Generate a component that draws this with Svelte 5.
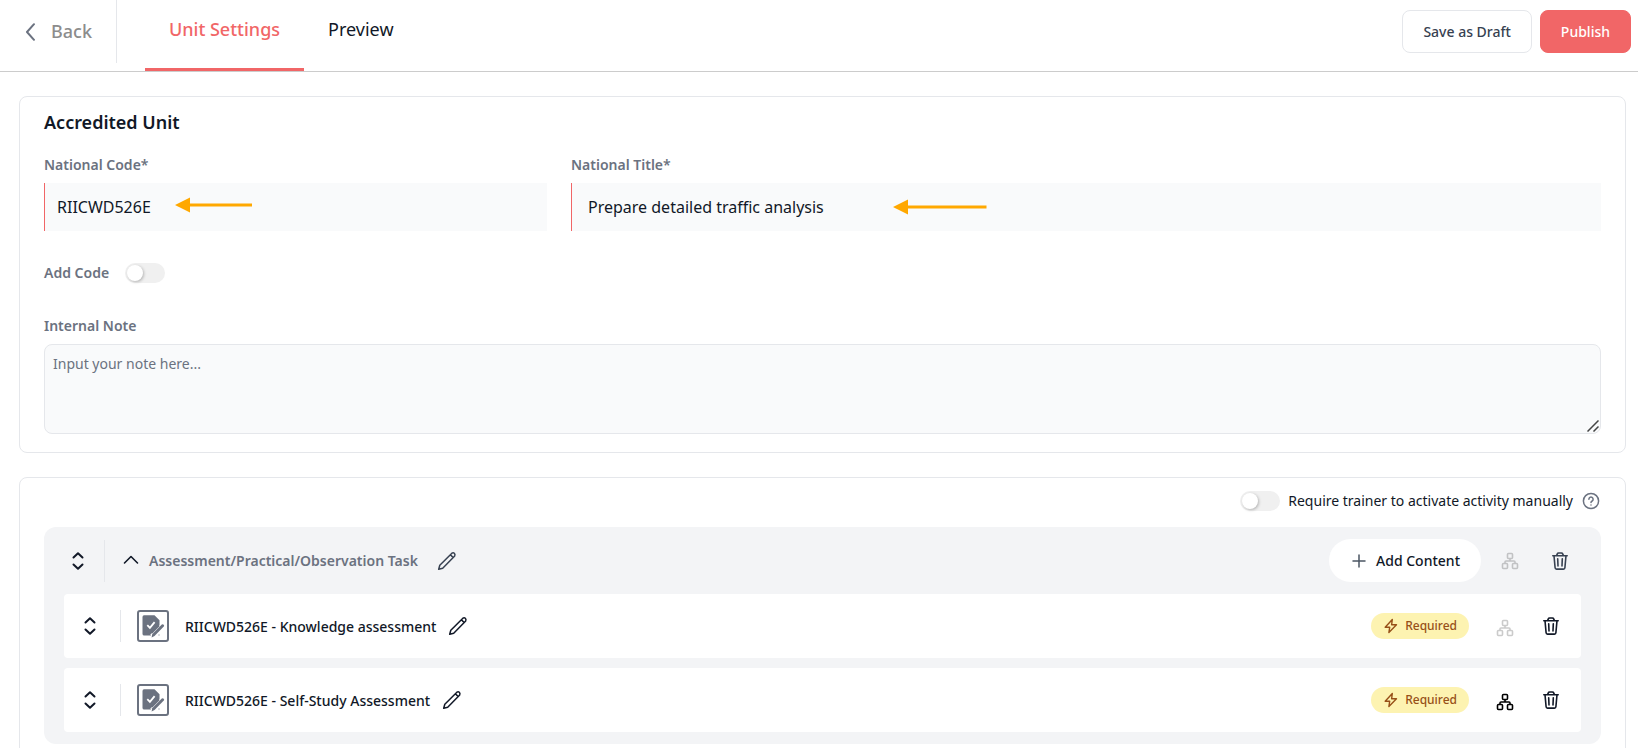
<script lang="ts">
  let code = $state("RIICWD526E");
  let title = $state("Prepare detailed traffic analysis");
  let note = $state("");
  let addCode = $state(false);
  let manual = $state(false);
  let open = $state(true);

  const items = [
    { name: "RIICWD526E - Knowledge assessment", linked: false },
    { name: "RIICWD526E - Self-Study Assessment", linked: true },
  ];
</script>

{#snippet sortIcon()}
  <svg width="20" height="20" viewBox="0 0 20 20" fill="none" stroke="currentColor" stroke-width="2" stroke-linecap="round" stroke-linejoin="round">
    <path d="M5.500 6.500 10 2.200l4.500 4.300M5.500 13.500l4.500 4.300 4.500-4.300" />
  </svg>
{/snippet}

{#snippet pencilIcon()}
  <svg width="20" height="20" viewBox="0 0 20 20" fill="none" stroke="currentColor" stroke-width="1.500" stroke-linecap="round" stroke-linejoin="round">
    <path d="M1.700 18.300l1.100-4L14.900 2.200q1.300-1 2.400.1t.4 2.600L5.700 17.200zM13.600 4l2.400 2.400" />
  </svg>
{/snippet}

{#snippet treeIcon()}
  <svg width="18" height="18" viewBox="0 0 18 18" fill="none" stroke="currentColor" stroke-width="1.600" stroke-linejoin="round">
    <rect x="6.500" y="1.500" width="5" height="5" rx="1" />
    <rect x="1.500" y="11.500" width="5" height="5" rx="1" />
    <rect x="11.500" y="11.500" width="5" height="5" rx="1" />
    <path d="M9 6.500V9M4 11.500V10q0-1 1-1h8q1 0 1 1v1.500" />
  </svg>
{/snippet}

{#snippet trashIcon()}
  <svg width="20" height="20" viewBox="0 0 20 20" fill="none" stroke="currentColor" stroke-width="1.600" stroke-linecap="round" stroke-linejoin="round">
    <path d="M2.800 4.800h14.400M4 4.800l1.100 12q.1 1.300 1.400 1.300h7q1.300 0 1.400-1.300l1.100-12M6.600 4.600l.7-1.700q.3-.9 1.300-.9h2.800q1 0 1.300.9l.7 1.700M7.700 7.800l.3 7.200M12.300 7.800l-.3 7.200" />
  </svg>
{/snippet}

{#snippet taskIcon()}
  <svg width="24" height="24" viewBox="0 0 24 24">
    <path fill="#6b7280" d="M3 1.200h10.500l5 5V13l-8.500 8.600H3.200A1.700 1.700 0 0 1 1.500 20V2.900Q1.500 1.200 3 1.200z" />
    <path fill="none" stroke="#fff" stroke-width="1.800" d="M6.300 11.200l2.600 2.600 4.700-5.600" />
    <path fill="none" stroke="#fff" stroke-width="5" d="M11 22.500 22.500 11" />
    <path fill="#6b7280" d="M10.600 23.600l.6-3.300 9.600-9.700q1-.8 1.900.1t.1 1.900l-9.300 9.500z" />
    <path fill="none" stroke="#6b7280" stroke-width="1.600" d="M10.800 19 18 11.800" />
    <circle cx="18" cy="21" r=".7" fill="#9ca3af" />
  </svg>
{/snippet}

<header class="topbar">
  <a class="back" href="#back">
    <svg width="16" height="20" viewBox="0 0 16 20" fill="none" stroke="#6b7280" stroke-width="2" stroke-linecap="round" stroke-linejoin="round">
      <path d="M11 3.200 4 11l7 7.800" />
    </svg>
    Back
  </a>
  <nav>
    <a class="tab active" href="#settings">Unit Settings</a>
    <a class="tab" href="#preview">Preview</a>
  </nav>
  <div class="actions">
    <button class="btn">Save as Draft</button>
    <button class="btn primary">Publish</button>
  </div>
</header>

<main>
  <section class="card">
    <h2>Accredited Unit</h2>
    <div class="fields">
      <div>
        <label class="label" for="code">National Code*</label>
        <div class="field">
          <input id="code" class="text" bind:value={code} />
          <svg class="arrow arrow-code" width="77" height="16" viewBox="0 0 77 16" fill="#ffa800">
            <path d="M0 8 15 .500v6h62v3H15v6z" />
          </svg>
        </div>
      </div>
      <div class="wide">
        <label class="label" for="title">National Title*</label>
        <div class="field">
          <input id="title" class="text roomy" bind:value={title} />
          <svg class="arrow arrow-title" width="94" height="16" viewBox="0 0 94 16" fill="#ffa800">
            <path d="M0 8 15 .500v6h78.500v3H15v6z" />
          </svg>
        </div>
      </div>
    </div>
    <div class="add-code">
      <label class="label" for="add-code">Add Code</label>
      <input id="add-code" class="switch" type="checkbox" bind:checked={addCode} />
    </div>
    <label class="label" for="note">Internal Note</label>
    <div class="field">
      <textarea id="note" placeholder="Input your note here..." bind:value={note}></textarea>
      <svg class="grip" width="12" height="12" viewBox="0 0 12 12" fill="none" stroke="#444" stroke-width="1.500">
        <path d="M.500 11.500l11-11M6.500 11.500l5-5" />
      </svg>
    </div>
  </section>

  <section class="card content">
    <div class="manual">
      <input id="manual" class="switch" type="checkbox" bind:checked={manual} />
      <label for="manual">Require trainer to activate activity manually</label>
      <button class="icon help" aria-label="Help">
        <svg width="18" height="18" viewBox="0 0 18 18" fill="none" stroke="currentColor" stroke-width="1.500" stroke-linecap="round">
          <circle cx="9" cy="9" r="7.600" />
          <path d="M6.900 7.200a2.100 2.100 0 1 1 3.200 1.800Q9 9.600 9 10.600M9 13v.1" />
        </svg>
      </button>
    </div>

    <div class="group">
      <div class="group-head">
        <button class="icon sort" aria-label="Move group">{@render sortIcon()}</button>
        <button class="icon toggle" aria-label="Collapse group" aria-expanded={open} onclick={() => (open = !open)}>
          <svg width="16" height="16" viewBox="0 0 16 16" fill="none" stroke="currentColor" stroke-width="1.600" stroke-linecap="round" stroke-linejoin="round">
            <path d="M1.500 10 8 3.500l6.500 6.500" />
          </svg>
        </button>
        <h3>Assessment/Practical/Observation Task</h3>
        <button class="icon edit" aria-label="Rename group">{@render pencilIcon()}</button>
        <div class="tools">
          <button class="add">
            <svg width="14" height="14" viewBox="0 0 14 14" fill="none" stroke="#4b5563" stroke-width="1.500" stroke-linecap="round">
              <path d="M7 1v12M1 7h12" />
            </svg>
            Add Content
          </button>
          <button class="icon tree faded" aria-label="Dependencies">{@render treeIcon()}</button>
          <button class="icon trash" aria-label="Delete group">{@render trashIcon()}</button>
        </div>
      </div>

      {#if open}
        <ul>
          {#each items as item (item.name)}
            <li>
              <button class="icon sort" aria-label="Move item">{@render sortIcon()}</button>
              <span class="task">{@render taskIcon()}</span>
              <span class="name">{item.name}</span>
              <button class="icon edit" aria-label="Rename item">{@render pencilIcon()}</button>
              <div class="tools">
                <span class="badge">
                  <svg width="16" height="16" viewBox="0 0 16 16" fill="none" stroke="currentColor" stroke-width="1.400" stroke-linejoin="round">
                    <path d="M9.300 1.500 2.200 9.200h4.500l-.8 5.300 7.600-7.700H8.600z" />
                  </svg>
                  Required
                </span>
                <button class="icon tree" class:faded={!item.linked} aria-label="Dependencies">{@render treeIcon()}</button>
                <button class="icon trash" aria-label="Delete item">{@render trashIcon()}</button>
              </div>
            </li>
          {/each}
        </ul>
      {/if}
    </div>
  </section>
</main>

<style>
  :global(body) {
    background: #fff;
    color: #111827;
    font-family: "Noto Sans", sans-serif;
    font-size: 14px;
    line-height: 20px;
  }

  * {
    box-sizing: border-box;
  }

  button,
  input,
  textarea {
    font: inherit;
    color: inherit;
    margin: 0;
  }

  button {
    cursor: pointer;
  }

  a {
    color: inherit;
    text-decoration: none;
  }

  svg {
    display: block;
    flex: none;
  }

  h2,
  h3,
  ul {
    margin: 0;
    padding: 0;
  }

  .topbar {
    display: flex;
    height: 72px;
    border-bottom: 1px solid #ccc;
    font-size: 18px;
    line-height: 28px;
  }

  .back {
    display: flex;
    align-items: center;
    gap: 12px;
    height: 63px;
    padding: 0 24px 2px 23px;
    border-right: 1px solid #e5e7eb;
    color: #8c8c8c;
    font-weight: 500;
  }

  nav {
    display: flex;
    margin-left: 28px;
  }

  .tab {
    padding: 15px 24px 0;
    border-bottom: 3px solid transparent;
  }

  .tab.active {
    color: #f16667;
    border-color: #f16667;
    font-weight: 500;
  }

  .actions {
    display: flex;
    gap: 8px;
    margin: 10px 7px 0 auto;
  }

  .btn {
    height: 43px;
    padding: 0 20px;
    border: 1px solid #e5e7eb;
    border-radius: 8px;
    background: #fff;
    color: #374151;
    font-size: 14px;
    line-height: 20px;
    font-weight: 500;
  }

  .btn.primary {
    border-color: #f16667;
    background: #f16667;
    color: #fff;
  }

  main {
    display: grid;
    gap: 24px;
    padding: 24px 12px 0 19px;
  }

  .card {
    min-width: 0;
    border: 1px solid #e5e7eb;
    border-radius: 8px;
    padding: 11px 24px 18px;
  }

  h2 {
    font-size: 18px;
    line-height: 28px;
    font-weight: 600;
  }

  .fields {
    display: grid;
    grid-template-columns: repeat(3, 1fr);
    gap: 24px;
    margin-top: 19px;
  }

  .wide {
    grid-column: span 2;
  }

  .label {
    display: block;
    color: #6b7280;
    font-weight: 600;
  }

  .field {
    position: relative;
    margin-top: 8px;
  }

  .text {
    display: block;
    width: 100%;
    height: 48px;
    padding: 0 12px;
    border: 0;
    border-left: 1px solid #f16667;
    border-radius: 0;
    background: #f9fafb;
    font-size: 16px;
  }

  .text.roomy {
    padding: 0 16px;
  }

  .arrow {
    position: absolute;
    top: 14px;
  }

  .arrow-code {
    left: 131px;
  }

  .arrow-title {
    left: 322px;
    top: 16px;
  }

  .add-code {
    display: flex;
    align-items: center;
    gap: 16px;
    margin: 32px 0 33px;
  }

  .switch {
    appearance: none;
    flex: none;
    width: 40px;
    height: 20px;
    padding: 2px;
    border-radius: 10px;
    background: #f0f0f0;
    cursor: pointer;
  }

  .switch::before {
    content: "";
    display: block;
    width: 16px;
    height: 16px;
    border-radius: 50%;
    background: #fff;
    box-shadow: 1px 1px 3px rgba(0, 0, 0, 0.25);
  }

  .switch:checked {
    background: #f16667;
  }

  .switch:checked::before {
    margin-left: 20px;
  }

  textarea {
    display: block;
    width: 100%;
    height: 90px;
    padding: 9px 8px;
    border: 1px solid #e5e7eb;
    border-radius: 8px;
    background: #f9fafb;
    resize: vertical;
  }

  textarea::placeholder {
    color: #6b7280;
  }

  textarea::-webkit-resizer {
    display: none;
  }

  .grip {
    position: absolute;
    right: 2px;
    bottom: 2px;
    pointer-events: none;
  }

  .content {
    padding-bottom: 24px;
  }

  .manual {
    display: flex;
    align-items: center;
    justify-content: flex-end;
    gap: 8px;
    height: 24px;
    margin-bottom: 14px;
  }

  .icon {
    display: flex;
    padding: 0;
    border: 0;
    background: none;
    color: #111827;
  }

  .help {
    color: #6b7280;
    padding: 0 1px;
  }

  .group {
    padding: 12px 20px;
    border-radius: 12px;
    background: #f3f4f6;
  }

  .group-head,
  li,
  .tools {
    display: flex;
    align-items: center;
  }

  .group-head {
    height: 43px;
    margin-bottom: 12px;
  }

  .group-head .sort {
    height: 42px;
    align-items: center;
    padding: 0 16px 0 4px;
    border-right: 1px solid #e5e7eb;
  }

  .toggle {
    margin: 0 10px 0 18px;
  }

  h3 {
    color: #6b7280;
    font-size: 14px;
    font-weight: 600;
  }

  .group-head .edit {
    margin-left: 19px;
    color: #374151;
  }

  .tools {
    margin-left: auto;
  }

  .add {
    display: flex;
    align-items: center;
    gap: 10px;
    height: 43px;
    padding: 0 21px 0 23px;
    border: 0;
    border-radius: 22px;
    background: #fff;
    font-weight: 500;
  }

  .group-head .tree {
    margin: 0 31px 0 20px;
    color: #000;
  }

  .group-head .trash {
    margin-right: 11px;
    color: #374151;
  }

  ul {
    display: grid;
    gap: 10px;
    list-style: none;
  }

  li {
    height: 64px;
    padding: 0 20px 0 16px;
    border-radius: 4px;
    background: #fff;
  }

  li .sort {
    height: 32px;
    align-items: center;
    padding: 0 20px 0 0;
    border-right: 1px solid #e5e7eb;
  }

  .task {
    display: flex;
    align-items: center;
    justify-content: center;
    width: 32px;
    height: 32px;
    margin: 0 16px;
    border: 2px solid #6b7280;
    border-radius: 3px;
  }

  .name {
    padding-top: 2px;
    font-weight: 500;
  }

  li .edit {
    margin-left: 12px;
  }

  .badge {
    display: flex;
    align-items: center;
    gap: 6px;
    height: 26px;
    padding: 0 12px;
    border-radius: 13px;
    background: #fdf3b1;
    color: #975018;
    font-size: 12px;
    line-height: 16px;
    font-weight: 500;
  }

  li .tree {
    margin: 4px 27px 0;
    color: #000;
  }

  .tree.faded {
    opacity: 0.2;
  }
</style>
